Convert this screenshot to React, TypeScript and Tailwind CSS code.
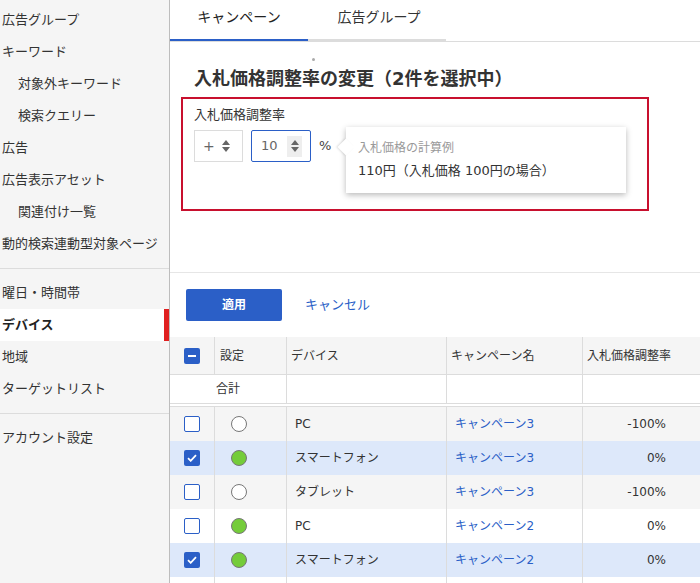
const font = { fontFamily: '"DejaVu Sans", "Noto Sans CJK JP", sans-serif' };

function NavItem({ label, sub, active }: { label: string; sub?: boolean; active?: boolean }) {
  return (
    <div
      className={`flex h-8 shrink-0 items-center pb-px text-[13px] leading-none ${sub ? 'pl-[18px]' : 'pl-0.5'} ${
        active ? 'border-r-[5px] border-[#e02020] bg-white font-bold text-[#222]' : 'text-[#333]'
      }`}
    >
      {label}
    </div>
  );
}

function Sidebar() {
  return (
    <aside className="flex w-[170px] shrink-0 flex-col border-r border-[#bdbdbd] bg-[#f5f5f5] pt-1">
      <NavItem label="広告グループ" />
      <NavItem label="キーワード" />
      <NavItem label="対象外キーワード" sub />
      <NavItem label="検索クエリー" sub />
      <NavItem label="広告" />
      <NavItem label="広告表示アセット" />
      <NavItem label="関連付け一覧" sub />
      <NavItem label="動的検索連動型対象ページ" />
      <div className="mt-2 mb-2 h-px bg-[#dcdcdc]" />
      <NavItem label="曜日・時間帯" />
      <NavItem label="デバイス" active />
      <NavItem label="地域" />
      <NavItem label="ターゲットリスト" />
      <div className="mt-2 mb-2 h-px bg-[#dcdcdc]" />
      <NavItem label="アカウント設定" />
    </aside>
  );
}

function Arrows() {
  return (
    <svg width="10" height="14" viewBox="0 0 10 14">
      <path d="M5 1 9 6H1Z M1 8h8L5 13Z" fill="#666" />
    </svg>
  );
}

function Checkbox({ state }: { state: 'on' | 'off' | 'mixed' }) {
  if (state === 'off') {
    return <span className="block size-4 rounded-[2px] border border-[#2b5fc7] bg-white" />;
  }
  return (
    <span className="flex size-4 items-center justify-center rounded-[2px] bg-[#2b5fc7]">
      {state === 'on' ? (
        <svg width="10" height="8" viewBox="0 0 10 8">
          <path d="M1 4.2 3.7 6.8 9 1.2" fill="none" stroke="#fff" strokeWidth="1.8" />
        </svg>
      ) : (
        <span className="h-0.5 w-2 bg-white" />
      )}
    </span>
  );
}

const cols = 'grid grid-cols-[45px_72px_160px_136px_118px]';
const cell = 'flex items-center border-r border-[#dcdcdc]';

const rows = [
  { on: false, live: false, device: 'PC', name: 'キャンペーン3', rate: '-100%', bg: 'bg-[#f5f5f5]' },
  { on: true, live: true, device: 'スマートフォン', name: 'キャンペーン3', rate: '0%', bg: 'bg-[#dde8fa]' },
  { on: false, live: false, device: 'タブレット', name: 'キャンペーン3', rate: '-100%', bg: 'bg-[#f5f5f5]' },
  { on: false, live: true, device: 'PC', name: 'キャンペーン2', rate: '0%', bg: 'bg-white' },
  { on: true, live: true, device: 'スマートフォン', name: 'キャンペーン2', rate: '0%', bg: 'bg-[#dde8fa]' },
];

function DataTable() {
  return (
    <div className="w-[531px] shrink-0 text-xs text-[#333]">
      <div className={`${cols} h-[38px] border-b border-[#dcdcdc] bg-[#f5f5f5]`}>
        <div className={`${cell} justify-center`}>
          <Checkbox state="mixed" />
        </div>
        <div className={`${cell} pl-[5px]`}>設定</div>
        <div className={`${cell} pl-1`}>デバイス</div>
        <div className={`${cell} pl-1`}>キャンペーン名</div>
        <div className="flex items-center pl-1">入札価格調整率</div>
      </div>
      <div className={`${cols} h-[29px] border-b border-[#dcdcdc]`}>
        <div />
        <div className={cell}>
          <span className="pl-px">合計</span>
        </div>
        <div className={cell} />
        <div className={cell} />
        <div />
      </div>
      <div className="h-0.5" />
      {rows.map((r, i) => (
        <div key={i} className={`${cols} ${r.bg} ${i === 0 ? 'h-[35px] border-t border-[#dcdcdc]' : 'h-[34px]'}`}>
          <div className={`${cell} justify-center`}>
            <Checkbox state={r.on ? 'on' : 'off'} />
          </div>
          <div className={`${cell} pl-4`}>
            <span className={`block size-4 rounded-full border border-[#777] ${r.live ? 'bg-[#74cc3a]' : 'bg-white'}`} />
          </div>
          <div className={`${cell} pl-2`}>{r.device}</div>
          <div className={`${cell} pl-2 text-[#2b5fc7]`}>{r.name}</div>
          <div className="flex items-center justify-end pr-[35px]">{r.rate}</div>
        </div>
      ))}
      <div className={`${cols} h-[34px]`}>
        <div className={cell} />
        <div className={cell} />
        <div className={cell} />
        <div className={cell} />
        <div />
      </div>
    </div>
  );
}

export default function App() {
  return (
    <div className="flex h-[583px] w-[700px] overflow-hidden bg-white" style={font}>
      <Sidebar />
      <main className="flex min-w-0 flex-1 flex-col">
        <div className="flex h-[42px] shrink-0 border-b border-[#dcdcdc]">
          <div className="flex h-[41px] w-[138px] items-center justify-center border-b-2 border-[#2b5fc7] pb-1.5 text-sm text-[#222]">
            キャンペーン
          </div>
          <div className="flex h-[41px] w-[138px] items-center justify-center border-b-2 border-[#dcdcdc] pb-1.5 pl-1 text-sm text-[#333]">
            広告グループ
          </div>
        </div>

        <div className="relative h-[231px] shrink-0 border-b border-[#e6e6e6]">
          <span className="absolute top-[16px] left-[142px] size-[3px] rounded-full bg-[#aaa]" />
          <h1 className="mt-[25px] ml-6 text-lg leading-6 font-bold text-[#333]">
            入札価格調整率の変更（2件を選択中）
          </h1>
          <section className="mt-1.5 ml-[11px] h-[114px] w-[468px] border-2 border-[#c8102e] pt-[7px] pl-[11px]">
            <div className="text-[13px] leading-[18px] text-[#333]">入札価格調整率</div>
            <div className="mt-1.5 flex items-start">
              <div className="flex h-8 w-[49px] items-center gap-1.5 border border-[#dcdcdc] pl-2 text-sm text-[#666]">
                <span>+</span>
                <Arrows />
              </div>
              <div className="ml-2 flex h-8 w-[60px] items-center justify-between rounded-[2px] border border-[#2b5fc7] pr-2 pl-[9px] text-[13px] text-[#666]">
                <span>10</span>
                <span className="flex h-[21px] w-[15px] items-center justify-center bg-[#eee]">
                  <Arrows />
                </span>
              </div>
              <span className="mt-2 ml-2 w-[13px] text-[13px] leading-4 text-[#444]">%</span>
              <div className="relative mt-[-3px] ml-3.5 h-[66px] w-[280px] bg-white pt-[11px] pl-3 shadow-[0_2px_6px_rgba(0,0,0,0.28)]">
                <span className="absolute top-[14px] left-[-6px] size-3 rotate-45 bg-white shadow-[-1px_1px_2px_rgba(0,0,0,0.12)]" />
                <div className="relative text-xs leading-5 text-[#999]">入札価格の計算例</div>
                <div className="relative mt-[3px] text-[13px] leading-5 text-[#333]">110円（入札価格 100円の場合）</div>
              </div>
            </div>
          </section>
        </div>

        <div className="flex shrink-0 items-center py-4 pl-4">
          <button className="h-8 w-24 rounded-[2px] bg-[#2b5fc7] text-xs font-bold text-white">適用</button>
          <a className="ml-[23px] text-[13px] text-[#2b5fc7]">キャンセル</a>
        </div>

        <DataTable />
      </main>
    </div>
  );
}
